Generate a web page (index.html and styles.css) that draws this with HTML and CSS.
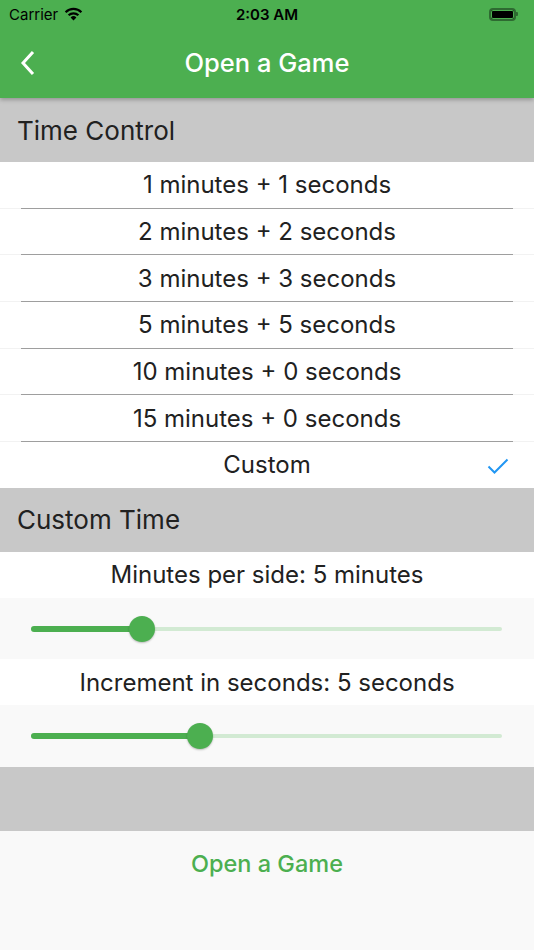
FILE: index.html
```html
<!DOCTYPE html>
<html>
<head>
    <title>Open a Game</title>
    <link rel="stylesheet" href="styles.css">
</head>
<body>
    <div class="appbar">
        <div class="status">
            <div class="carrier">Carrier
                <svg class="wifi" width="19" height="14" viewBox="0 0 19 14">
                    <path d="M9.5 13.5 L6.6 10.4 A4.2 4.2 0 0 1 12.4 10.4 Z" fill="#000"/>
                    <path d="M4.6 8.3 A7 7 0 0 1 14.4 8.3" fill="none" stroke="#000" stroke-width="2.2"/>
                    <path d="M1.6 5.2 A11.2 11.2 0 0 1 17.4 5.2" fill="none" stroke="#000" stroke-width="2.2"/>
                </svg>
            </div>
            <div class="clock">2:03 AM</div>
            <div class="battery"><div class="battery-fill"></div><div class="battery-cap"></div></div>
        </div>
        <div class="toolbar">
            <svg class="back" width="16" height="26" viewBox="0 0 16 26">
                <path d="M13 2 L3 13 L13 24" fill="none" stroke="#fff" stroke-width="3"/>
            </svg>
            <div class="title">Open a Game</div>
        </div>
    </div>

    <div class="section-head">Time Control</div>
    <div class="options">
        <div class="option">1 minutes + 1 seconds</div>
        <div class="option">2 minutes + 2 seconds</div>
        <div class="option">3 minutes + 3 seconds</div>
        <div class="option">5 minutes + 5 seconds</div>
        <div class="option">10 minutes + 0 seconds</div>
        <div class="option">15 minutes + 0 seconds</div>
        <div class="option last">Custom
            <svg class="check" width="22" height="16" viewBox="0 0 22 16">
                <path d="M1.5 8.5 L7.5 14.5 L20.5 1.5" fill="none" stroke="#2196f3" stroke-width="2"/>
            </svg>
        </div>
    </div>

    <div class="section-head">Custom Time</div>
    <div class="label">Minutes per side: 5 minutes</div>
    <div class="slider-row">
        <div class="track">
            <div class="active" style="width: 23.6%"><div class="thumb"></div></div>
        </div>
    </div>
    <div class="label">Increment in seconds: 5 seconds</div>
    <div class="slider-row">
        <div class="track">
            <div class="active" style="width: 35.9%"><div class="thumb"></div></div>
        </div>
    </div>
    <div class="spacer"></div>

    <div class="bottom">
        <div class="open-btn">Open a Game</div>
    </div>
</body>
</html>
```

FILE: styles.css
```css
body {
  margin: 0;
  width: 534px;
  height: 950px;
  overflow: hidden;
  background-color: #f9f9f9;
  font-family: Inter, "Liberation Sans", sans-serif;
  color: #212121;
  display: flex;
  flex-direction: column;
}

.appbar {
  background-color: #4caf50;
  height: 98px;
  box-shadow: 0 2px 4px rgba(0, 0, 0, 0.25);
  position: relative;
  z-index: 1;
}

.status {
  height: 28px;
  display: flex;
  align-items: center;
  justify-content: space-between;
  padding: 0 9px;
  font-size: 15px;
  color: #000;
}

.carrier {
  display: flex;
  align-items: center;
  gap: 6px;
  width: 110px;
}

.clock {
  font-weight: 600;
}

.battery {
  width: 110px;
  display: flex;
  justify-content: flex-end;
  align-items: center;
}

.battery-fill {
  width: 23px;
  height: 9px;
  background-color: #000;
  border: 2px solid #2e6a31;
  border-radius: 4px;
  box-shadow: inset 0 0 0 1px #4caf50;
}

.battery-cap {
  width: 2px;
  height: 4px;
  background-color: #2e6a31;
  border-radius: 0 1px 1px 0;
  margin-right: 7px;
}

.toolbar {
  height: 70px;
  display: flex;
  align-items: center;
  justify-content: center;
  position: relative;
}

.back {
  position: absolute;
  left: 20px;
  top: 22px;
}

.title {
  color: #fff;
  font-size: 25.5px;
  font-weight: 500;
  margin-top: -1px;
}

.section-head {
  background-color: #c8c8c8;
  height: 64px;
  display: flex;
  align-items: center;
  padding-left: 17px;
  font-size: 26px;
  flex-shrink: 0;
}

.options {
  background-color: #fff;
}

.option {
  height: 46.67px;
  box-sizing: border-box;
  display: flex;
  align-items: center;
  justify-content: center;
  font-size: 24px;
  position: relative;
  border-bottom: 1px solid #f2f2f2;
}

.option::after {
  content: "";
  position: absolute;
  left: 21px;
  right: 21px;
  bottom: -1px;
  height: 1px;
  background-color: #9e9e9e;
}

.option.last {
  height: 46px;
  border-bottom: 0;
}

.option.last::after {
  display: none;
}

.check {
  position: absolute;
  right: 25px;
  top: 16px;
}

.label {
  background-color: #fff;
  height: 46px;
  display: flex;
  align-items: center;
  justify-content: center;
  font-size: 24px;
  flex-shrink: 0;
}

.slider-row {
  height: 61.5px;
  display: flex;
  align-items: center;
  padding: 0 32px 0 31px;
  flex-shrink: 0;
}

.track {
  flex: 1;
  height: 4px;
  border-radius: 2px;
  background-color: #d2ead3;
  display: flex;
  align-items: center;
}

.active {
  height: 6px;
  border-radius: 3px;
  background-color: #4caf50;
  position: relative;
}

.thumb {
  position: absolute;
  right: -13px;
  top: -10px;
  width: 26px;
  height: 26px;
  border-radius: 50%;
  background-color: #4caf50;
  box-shadow: 0 1px 2px rgba(0, 0, 0, 0.25);
}

.spacer {
  background-color: #c8c8c8;
  height: 64px;
  flex-shrink: 0;
}

.bottom {
  flex: 1;
  background-color: #f9f9f9;
  display: flex;
  justify-content: center;
}

.open-btn {
  color: #4caf50;
  font-size: 23.5px;
  font-weight: 500;
  margin-top: 18px;
}
```
